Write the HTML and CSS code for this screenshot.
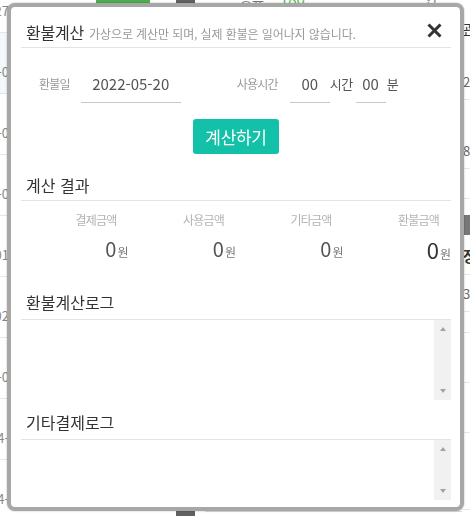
FILE: index.html
```html
<!DOCTYPE html>
<html lang="ko">
<head>
    <meta charset="UTF-8">
    <meta name="viewport" content="width=device-width, initial-scale=1.0">
    <title>환불계산</title>
    <link rel="stylesheet" href="styles.css">
</head>
<body>

    <!-- page behind the popup -->
    <div class="page">
        <div class="bg-left">
            <div class="bg-row">2021-04-27</div>
            <div class="bg-row tint">2022-04-0</div>
            <div class="bg-row">2022-04-0</div>
            <div class="bg-row">2022-04-0</div>
            <div class="bg-row">2022-01-01</div>
            <div class="bg-row">2022-02-02</div>
            <div class="bg-row">2022-04-0</div>
            <div class="bg-row">2022-04-</div>
            <div class="bg-row">2022-04-</div>
        </div>
        <div class="bg-mid">
            <div class="bg-top">
                <span class="bg-badge">이용중</span>
                <span class="bg-block"></span>
                <span class="bg-text">종류</span>
                <span class="bg-num">180</span>
                <span class="bg-text far">연</span>
            </div>
            <div class="bg-bottom">
                <span class="bg-block"></span>
                <span class="bg-line"></span>
            </div>
        </div>
        <div class="bg-right">
            <div class="r-cell link" style="height:46px">관리</div>
            <div class="r-cell line" style="height:54px">2</div>
            <div class="r-cell line" style="height:69px">8</div>
            <div class="r-cell line" style="height:30px"></div>
            <div class="r-cell" style="height:16px"></div>
            <div class="r-bar"></div>
            <div class="r-cell line strong" style="height:40px">장</div>
            <div class="r-cell line" style="height:37px">3)</div>
            <div class="r-cell line" style="height:21px"></div>
            <div class="r-cell line" style="height:50px"></div>
            <div class="r-cell line" style="height:50px"></div>
            <div class="r-cell line" style="height:77px"></div>
        </div>
    </div>

    <div class="modal">
        <div class="modal-head">
            <h3 class="title">환불계산<small class="sub">가상으로 계산만 되며, 실제 환불은 일어나지 않습니다.</small></h3>
            <button class="close" type="button">
                <svg width="15" height="15" viewBox="0 0 15 15">
                    <path d="M1.5 1.5 L13.5 13.5 M13.5 1.5 L1.5 13.5" stroke="#333" stroke-width="3" fill="none"/>
                </svg>
            </button>
        </div>

        <div class="form-row">
            <label class="f-label">환불일</label>
            <input class="f-input date" type="text" value="2022-05-20">
            <label class="f-label time">사용시간</label>
            <input class="f-input hour" type="text" value="00">
            <span class="unit">시간</span>
            <input class="f-input min" type="text" value="00">
            <span class="unit last">분</span>
        </div>

        <div class="btn-wrap">
            <button class="btn-calc" type="button">계산하기</button>
        </div>

        <h4 class="section-title">계산 결과</h4>
        <div class="result">
            <div class="result-col">
                <div class="r-label">결제금액</div>
                <div class="r-value"><b>0</b>원</div>
            </div>
            <div class="result-col">
                <div class="r-label">사용금액</div>
                <div class="r-value"><b>0</b>원</div>
            </div>
            <div class="result-col">
                <div class="r-label">기타금액</div>
                <div class="r-value"><b>0</b>원</div>
            </div>
            <div class="result-col">
                <div class="r-label">환불금액</div>
                <div class="r-value total"><b>0</b>원</div>
            </div>
        </div>

        <h4 class="section-title log">환불계산로그</h4>
        <div class="log-box">
            <textarea></textarea>
            <div class="scroll"><span class="arrow up"></span><span class="arrow down"></span></div>
        </div>

        <h4 class="section-title log">기타결제로그</h4>
        <div class="log-box small">
            <textarea></textarea>
            <div class="scroll"><span class="arrow up"></span><span class="arrow down"></span></div>
        </div>
    </div>

</body>
</html>
```

FILE: styles.css
```css
* {
    box-sizing: border-box;
}
html, body {
    margin: 0;
    height: 100%;
}
body {
    font-family: "Noto Sans CJK KR", "Noto Sans", sans-serif;
    background: #fff;
    color: #333;
    overflow: hidden;
}

/* page behind */
.page {
    display: flex;
    height: 516px;
}
.bg-left {
    width: 9px;
    display: flex;
    flex-direction: column;
    margin-top: -28px;
}
.bg-row {
    height: 61px;
    flex: none;
    padding-top: 17px;
    display: flex;
    align-items: center;
    justify-content: flex-end;
    white-space: nowrap;
    font-size: 13px;
    color: #888;
    border-bottom: 1px solid #e6e6e6;
}
.bg-row.tint {
    background: #f3f8fa;
}
.bg-mid {
    flex: 1;
    display: flex;
    flex-direction: column;
    justify-content: space-between;
}
.bg-top {
    height: 8px;
    display: flex;
    align-items: flex-end;
    overflow: hidden;
}
.bg-badge {
    margin-left: 87px;
    width: 54px;
    height: 22px;
    background: #4cae4c;
    color: #fff;
    font-size: 12px;
    text-align: center;
    border-radius: 4px;
    line-height: 14px;
}
.bg-block {
    margin-left: 26px;
    width: 19px;
    height: 9px;
    background: #616161;
}
.bg-text {
    margin-left: 45px;
    font-size: 13px;
    line-height: 14px;
    color: #777;
    align-self: flex-start;
    margin-top: -8px;
}
.bg-num {
    margin-left: 16px;
    font-size: 15px;
    line-height: 14px;
    color: #5cb85c;
    align-self: flex-start;
    margin-top: -8px;
}
.bg-text.far {
    margin-left: 120px;
}
.bg-bottom {
    height: 9px;
    display: flex;
}
.bg-bottom .bg-block {
    margin-left: 167px;
}
.bg-line {
    flex: 1;
    margin: 4px 0 0 10px;
    border-top: 1px solid #ddd;
}
.bg-right {
    width: 8px;
    display: flex;
    flex-direction: column;
}
.r-cell {
    flex: none;
    display: flex;
    align-items: flex-end;
    padding-bottom: 8px;
    padding-left: 1px;
    font-size: 13px;
    color: #666;
    white-space: nowrap;
    overflow: hidden;
}
.r-cell.line {
    border-bottom: 1px solid #e6e6e6;
}
.r-cell.link {
    color: #333;
    text-decoration: underline;
}
.r-cell.strong {
    font-weight: bold;
    color: #333;
    font-size: 15px;
}
.r-bar {
    height: 20px;
    background: #777;
}

/* popup */
.modal {
    position: fixed;
    left: 7px;
    top: 3px;
    width: 457px;
    height: 508px;
    background: #fff;
    border: 4px solid #a7a7a7;
    border-radius: 8px;
    box-shadow: 0 0 2px rgba(0, 0, 0, 0.3);
    padding: 0 9px 0 10px;
    overflow: hidden;
}
.modal-head {
    display: flex;
    align-items: center;
    justify-content: space-between;
    height: 41px;
    padding: 10px 9px 0 5px;
    border-bottom: 1px solid #e3e3e3;
}
.title {
    margin: 0;
    font-size: 16px;
    font-weight: normal;
    letter-spacing: -0.2px;
    color: #333;
    white-space: nowrap;
}
.sub {
    margin-left: 5px;
    font-size: 12px;
    letter-spacing: -0.1px;
    color: #999;
}
.close {
    border: 0;
    background: none;
    padding: 0;
    margin-top: -3px;
    width: 15px;
    height: 15px;
    cursor: pointer;
}
.close svg {
    display: block;
}

.form-row {
    display: flex;
    align-items: center;
    padding: 16px 0 0 18px;
}
.f-label {
    font-size: 12px;
    letter-spacing: -0.8px;
    color: #999;
    margin-right: 11px;
}
.f-label.time {
    margin-left: 56px;
    margin-right: 12px;
}
.f-input {
    border: 0;
    border-bottom: 1px solid #c8c8c8;
    padding: 10px 0 8px;
    font-family: inherit;
    font-size: 15px;
    line-height: 20px;
    color: #555;
    text-align: center;
    background: transparent;
    outline: none;
}
.f-input.date {
    width: 100px;
}
.f-input.hour {
    width: 40px;
}
.f-input.min {
    width: 30px;
    margin-left: 3px;
}
.unit {
    font-size: 13px;
    letter-spacing: -0.5px;
    color: #555;
}
.unit.last {
    margin-left: 1px;
}

.btn-wrap {
    text-align: center;
    margin-top: 16px;
}
.btn-calc {
    height: 35px;
    padding: 0 12px;
    border: 0;
    border-radius: 3px;
    background: #12c1a7;
    color: #fff;
    font-family: inherit;
    font-size: 17px;
    letter-spacing: -0.3px;
    cursor: pointer;
}

.section-title {
    margin: 21px 0 0;
    padding: 0 0 5px 5px;
    font-size: 16px;
    line-height: 20px;
    font-weight: normal;
    color: #333;
    border-bottom: 1px solid #e3e3e3;
}
.section-title.log {
    margin-top: 25px;
    padding-bottom: 7px;
}

.result {
    display: grid;
    grid-template-columns: repeat(4, 1fr);
}
.result-col {
    text-align: right;
}
.r-label {
    margin-top: 11px;
    padding-right: 12px;
    font-size: 12px;
    line-height: 16px;
    letter-spacing: -0.8px;
    color: #b3b3b3;
}
.r-value {
    margin-top: 8px;
    font-size: 12px;
    line-height: 26px;
    color: #777;
}
.r-value b {
    font-weight: normal;
    font-size: 20px;
    color: #555;
    margin-right: 1px;
}
.r-value.total b {
    font-size: 22px;
    color: #333;
}

.log-box {
    display: flex;
    height: 80px;
}
.log-box.small {
    height: 60px;
}
.log-box + .section-title {
    margin-top: 12px;
}
.log-box textarea {
    flex: 1;
    border: 0;
    resize: none;
    outline: none;
    overflow: hidden;
    font-family: inherit;
}
.scroll {
    width: 17px;
    background: #f1f1f1;
    display: flex;
    flex-direction: column;
    justify-content: space-between;
    align-items: center;
    padding: 7px 0;
}
.arrow {
    width: 0;
    height: 0;
    border-left: 3.5px solid transparent;
    border-right: 3.5px solid transparent;
}
.arrow.up {
    border-bottom: 4px solid #a3a3a3;
}
.arrow.down {
    border-top: 4px solid #a3a3a3;
}
```
